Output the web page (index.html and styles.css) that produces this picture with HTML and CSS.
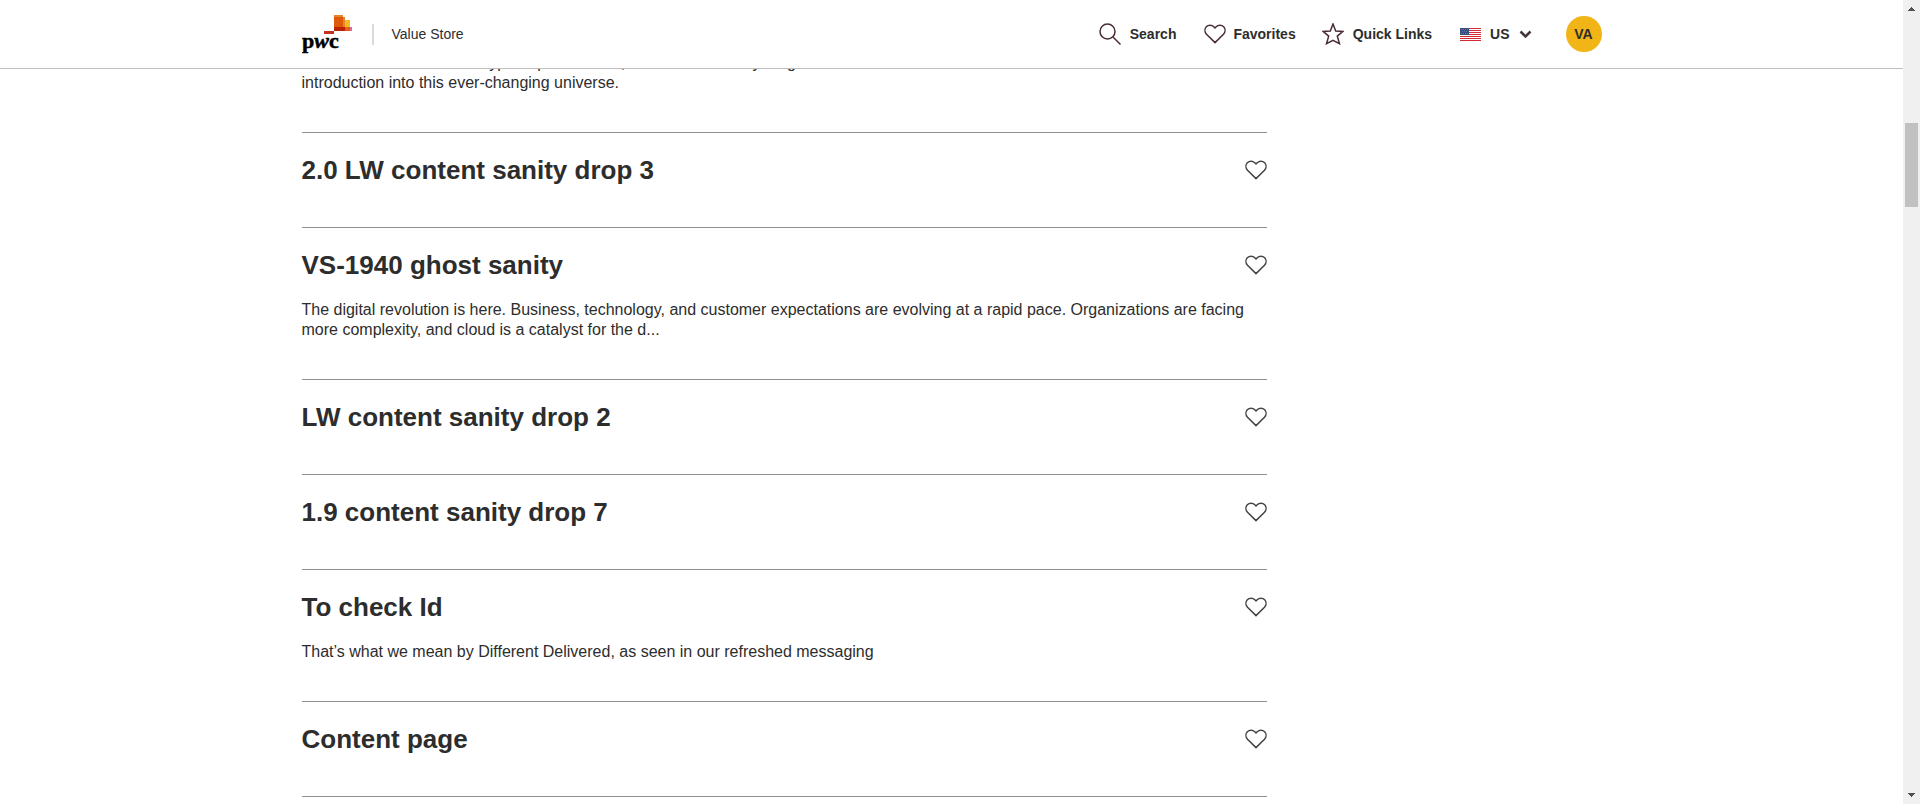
FILE: index.html
```
<!DOCTYPE html>
<html lang="en">
<head>
<meta charset="utf-8">
<title>Value Store</title>
<link rel="stylesheet" href="styles.css">
</head>
<body>
<svg class="sprite" aria-hidden="true">
  <symbol id="heart" viewBox="0 0 22 20"><path d="M11 18.6 2.5 10.2C.5 8 .5 4.700 2.300 2.700 4.400.6 7.800.6 9.800 2.700L11 4l1.200-1.300c2-2.100 5.400-2.100 7.500 0 1.800 2 1.800 5.300-.2 7.500Z"/></symbol>
</svg>
<header class="header">
  <div class="container header-row">
    <a class="brand" href="#" aria-label="pwc">
      <svg class="logo" viewBox="0 0 50 42">
        <rect x="22" y="18" width="10" height="3" fill="#c3301c"/>
        <rect x="32" y="2" width="9" height="16" fill="#dc5a08"/>
        <rect x="32" y="2" width="9" height="2" fill="#e8852a"/>
        <rect x="41" y="4" width="2" height="14" fill="#e8852a"/>
        <rect x="43" y="7" width="5" height="7" fill="#f5b921"/>
        <rect x="43" y="14" width="5" height="4" fill="#e0601c"/>
        <rect x="32" y="14" width="11" height="4" fill="#bb2205"/>
        <rect x="48" y="14" width="2" height="4" fill="#dc6a9c"/>
        <text class="logo-text" x="0" y="35">p<tspan class="logo-w">w</tspan>c</text>
      </svg>
    </a>
    <span class="divider"></span>
    <span class="site">Value Store</span>
    <nav class="nav">
      <a class="nav-link" href="#"><svg class="icon" viewBox="0 0 22 22"><circle cx="8.500" cy="8.500" r="7.500"/><path d="m14 14 7.500 7.500"/></svg>Search</a>
      <a class="nav-link nav-fav" href="#"><svg class="icon" viewBox="0 0 22 20"><use href="#heart"/></svg>Favorites</a>
      <a class="nav-link" href="#"><svg class="icon" viewBox="0 0 22 22"><path d="m11 1 2.700 7 7.300.4-5.700 4.700 2.200 7.600L11 17.400l-6.500 3.300 2.200-7.600L1 8.400 8.300 8Z"/></svg>Quick Links</a>
      <button class="nav-link region" type="button">
        <svg class="flag" viewBox="0 0 21 14"><path fill="#fff" d="M0 1h21v13H0z"/><path fill="#d22b33" d="M0 1h21v1H0zM0 3h21v1H0zM0 5h21v1H0zM0 7h21v1H0zM0 9h21v1H0zM0 11h21v1H0zM0 13h21v1H0z"/><path fill="#37507f" d="M0 1h9v7H0z"/><path stroke="#6379a3" stroke-dasharray="1 1" d="M1 2.500h7M2 4.500h6M1 6.500h7"/></svg>US
        <svg class="chevron" viewBox="0 0 13 10"><path d="m1.500 2.500 5 5 5-5"/></svg>
      </button>
      <button class="avatar" type="button">VA</button>
    </nav>
  </div>
</header>
<main class="container results">
  <article class="item">
    <p class="desc">From metaverse and the hype to prominence, to some of us may be good as an <br>introduction into this ever-changing universe.</p>
  </article>
  <article class="item">
    <div class="item-head"><h2 class="title">2.0 LW content sanity drop 3</h2><button class="fav" type="button" aria-label="Add to favorites"><svg class="fav-icon"><use href="#heart"/></svg></button></div>
  </article>
  <article class="item">
    <div class="item-head"><h2 class="title">VS-1940 ghost sanity</h2><button class="fav" type="button" aria-label="Add to favorites"><svg class="fav-icon"><use href="#heart"/></svg></button></div>
    <p class="desc">The digital revolution is here. Business, technology, and customer expectations are evolving at a rapid pace. Organizations are facing <br>more complexity, and cloud is a catalyst for the d...</p>
  </article>
  <article class="item">
    <div class="item-head"><h2 class="title">LW content sanity drop 2</h2><button class="fav" type="button" aria-label="Add to favorites"><svg class="fav-icon"><use href="#heart"/></svg></button></div>
  </article>
  <article class="item">
    <div class="item-head"><h2 class="title">1.9 content sanity drop 7</h2><button class="fav" type="button" aria-label="Add to favorites"><svg class="fav-icon"><use href="#heart"/></svg></button></div>
  </article>
  <article class="item">
    <div class="item-head"><h2 class="title">To check Id</h2><button class="fav" type="button" aria-label="Add to favorites"><svg class="fav-icon"><use href="#heart"/></svg></button></div>
    <p class="desc">That’s what we mean by Different Delivered, as seen in our refreshed messaging</p>
  </article>
  <article class="item last">
    <div class="item-head"><h2 class="title">Content page</h2><button class="fav" type="button" aria-label="Add to favorites"><svg class="fav-icon"><use href="#heart"/></svg></button></div>
  </article>
</main>
<div class="scrollbar" aria-hidden="true">
  <svg class="arrow" viewBox="0 0 7 4"><path d="M3 0h1v1h1v1h1v1h1v1H0V3h1V2h1V1h1z"/></svg>
  <div class="track"><div class="thumb"></div></div>
  <svg class="arrow" viewBox="0 0 7 4"><path d="M0 0h7v1H6v1H5v1H4v1H3V3H2V2H1V1H0z"/></svg>
</div>
</body>
</html>
```
FILE: styles.css
```
* { box-sizing: border-box; }
body {
  margin: 0;
  padding-right: 17px;
  background: #fff;
  color: #2d2d2d;
  font-family: "Liberation Sans", Arial, sans-serif;
  font-size: 16px;
  line-height: 20px;
}
a { color: inherit; text-decoration: none; }
button { padding: 0; border: 0; background: none; color: inherit; font: inherit; cursor: pointer; }
.sprite { position: absolute; width: 0; height: 0; }
.container { max-width: 1300px; margin: 0 auto; }

.header {
  position: fixed;
  top: 0;
  left: 0;
  right: 17px;
  z-index: 1;
  background: #fff;
  border-bottom: 1px solid #bdbdbd;
}
.header-row { display: flex; align-items: center; height: 68px; }
.brand { display: flex; }
.logo { width: 50px; height: 42px; }
.logo-text { font: bold 22px "Liberation Serif", serif; fill: #000; stroke: #000; stroke-width: 0.5; }
.logo-w { font-style: italic; }
.divider { width: 2px; height: 21px; margin: 0 18px 0 20px; background: #d9d9d9; }
.site { font-size: 14px; }
.nav { display: flex; align-items: center; margin-left: auto; font-size: 14px; font-weight: bold; }
.nav-link { display: flex; align-items: center; gap: 9px; margin-right: 28px; }
.nav-fav { gap: 7px; margin-right: 26px; }
.icon { width: 22px; height: 22px; fill: none; stroke: #482c34; stroke-width: 1.5; }
.flag { width: 21px; height: 14px; shape-rendering: crispEdges; }
.chevron { width: 13px; height: 10px; fill: none; stroke: #44363b; stroke-width: 2.5; }
.region { margin-right: 34px; }
.avatar { width: 36px; height: 36px; border-radius: 50%; background: #f2b518; }

.results {
  display: grid;
  grid-template-columns: minmax(0, 965px);
  padding-top: 53px;
}
.item { padding-bottom: 39px; }
.item + .item { padding-top: 19px; border-top: 1px solid #8f8f8f; }
.last { border-bottom: 1px solid #8f8f8f; }
.item-head { display: flex; align-items: center; justify-content: space-between; height: 36px; }
.title { margin: 0; font-size: 26px; line-height: 36px; }
.desc { margin: 0; }
.item-head + .desc { margin-top: 17px; }
.fav { display: flex; }
.fav-icon { width: 22px; height: 20px; fill: none; stroke: #444; stroke-width: 1.5; }

.scrollbar {
  position: fixed;
  top: 0;
  right: 0;
  bottom: 0;
  display: flex;
  flex-direction: column;
  align-items: center;
  width: 17px;
  padding: 7px 0;
  background: #f0f0f0;
}
.arrow { width: 7px; height: 4px; fill: #505050; }
.track { flex: 1; padding-top: 112px; }
.thumb { width: 13px; height: 84px; background: #c1c1c1; }
```
